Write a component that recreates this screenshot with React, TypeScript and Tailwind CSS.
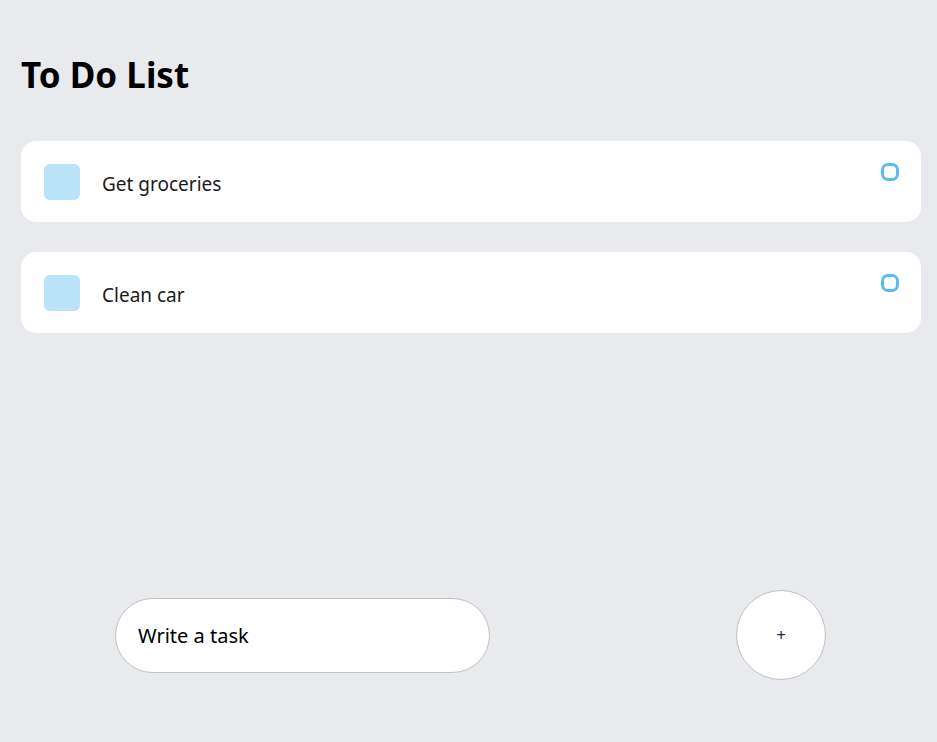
import { useState } from 'react';

function Task({ text }: { text: string }) {
  return (
    <div className="bg-white rounded-[15px] pl-[23px] pr-[22px] pt-[23px] pb-[22px] flex items-start justify-between mb-[30px]">
      <div className="flex items-center">
        <div className="w-9 h-9 rounded-[6px] bg-[#55BCF6] opacity-40 mr-[22px]" />
        <p className="text-[19px] leading-[28px] text-[#1a1a1a] max-w-[80%] mt-[4px]">{text}</p>
      </div>
      <div className="w-[18px] h-[18px] rounded-[7px] border-[3px] border-[#55BCF6] -mt-px" />
    </div>
  );
}

export default function App() {
  const [task, setTask] = useState('');
  const items = ['Get groceries', 'Clean car'];

  return (
    <div className="h-screen flex flex-col bg-[#E8EAED] font-['Noto_Sans',sans-serif]">
      <div className="pl-[21px] pr-[16px] pt-[49px]">
        <h1 className="text-[35px] font-bold leading-[52px] text-black">To Do List</h1>
        <div className="mt-[40px]">
          {items.map((t) => (
            <Task key={t} text={t} />
          ))}
        </div>
      </div>
      <div className="flex-1" />
      <div className="flex items-center justify-between pl-[115px] pr-[111px] pb-[62px]">
        <input
          value={task}
          onChange={(e) => setTask(e.target.value)}
          placeholder="Write a task"
          className="w-[375px] h-[75px] px-[22px] rounded-full bg-white border border-[#C0C0C0] text-[20px] text-black placeholder:text-black outline-none"
        />
        <button className="w-[90px] h-[90px] rounded-full bg-white border border-[#C0C0C0] flex items-center justify-center text-[17px] text-[#1a2a4a]">
          +
        </button>
      </div>
    </div>
  );
}
